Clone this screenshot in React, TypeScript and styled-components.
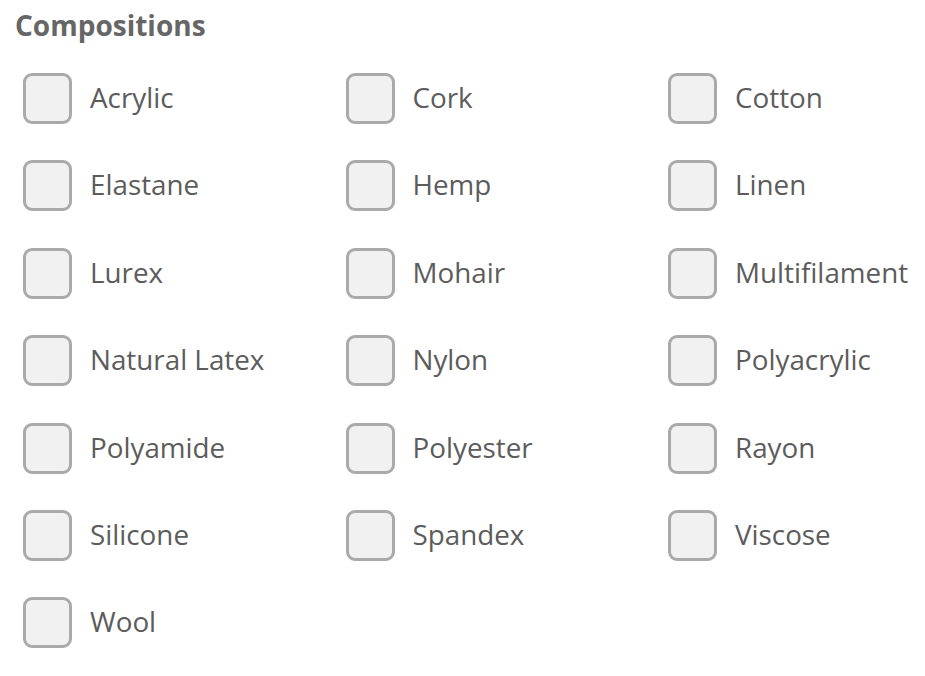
import React, { useState } from 'react'
import styled, { createGlobalStyle } from 'styled-components'

const GlobalStyle = createGlobalStyle`
    body {
        margin: 0;
        background: #ffffff;
        font-family: "Open Sans", "Liberation Sans", sans-serif;
    }
`

const Page = styled.div`
    padding: 5px 15px 0 15px;
`

const Title = styled.h2`
    margin: 0;
    font-size: 28px;
    font-weight: 700;
    color: #666666;
    line-height: 40px;
`

const Grid = styled.div`
    display: grid;
    grid-template-columns: 322.5px 322.5px 1fr;
    grid-auto-rows: 87.4px;
    padding: 28px 0 0 8px;
`

const Option = styled.label`
    display: flex;
    align-items: flex-start;
    gap: 18px;
    cursor: pointer;
    white-space: nowrap;
`

const Box = styled.span<{checked?: boolean}>`
    box-sizing: border-box;
    width: 49px;
    height: 51px;
    flex: none;
    border: 3px solid #aaaaaa;
    border-radius: 9px;
    background: ${({checked}) => checked ? '#d9d9d9' : '#f1f1f1'};
`

const Label = styled.span`
    font-size: 27.8px;
    color: #5c5c5c;
    line-height: 48px;
`

const materials = [
    'Acrylic', 'Cork', 'Cotton',
    'Elastane', 'Hemp', 'Linen',
    'Lurex', 'Mohair', 'Multifilament',
    'Natural Latex', 'Nylon', 'Polyacrylic',
    'Polyamide', 'Polyester', 'Rayon',
    'Silicone', 'Spandex', 'Viscose',
    'Wool'
]

export default function App() {
    const [selected, setSelected] = useState<string[]>([])
    const toggle = (name: string) => {
        setSelected(prev => prev.includes(name) ? prev.filter(n => n !== name) : [...prev, name])
    }

    return (
        <Page>
            <GlobalStyle />
            <Title>Compositions</Title>
            <Grid>
                {materials.map(m => (
                    <Option key={m} onClick={() => toggle(m)}>
                        <Box checked={selected.includes(m)} />
                        <Label>{m}</Label>
                    </Option>
                ))}
            </Grid>
        </Page>
    )
}
